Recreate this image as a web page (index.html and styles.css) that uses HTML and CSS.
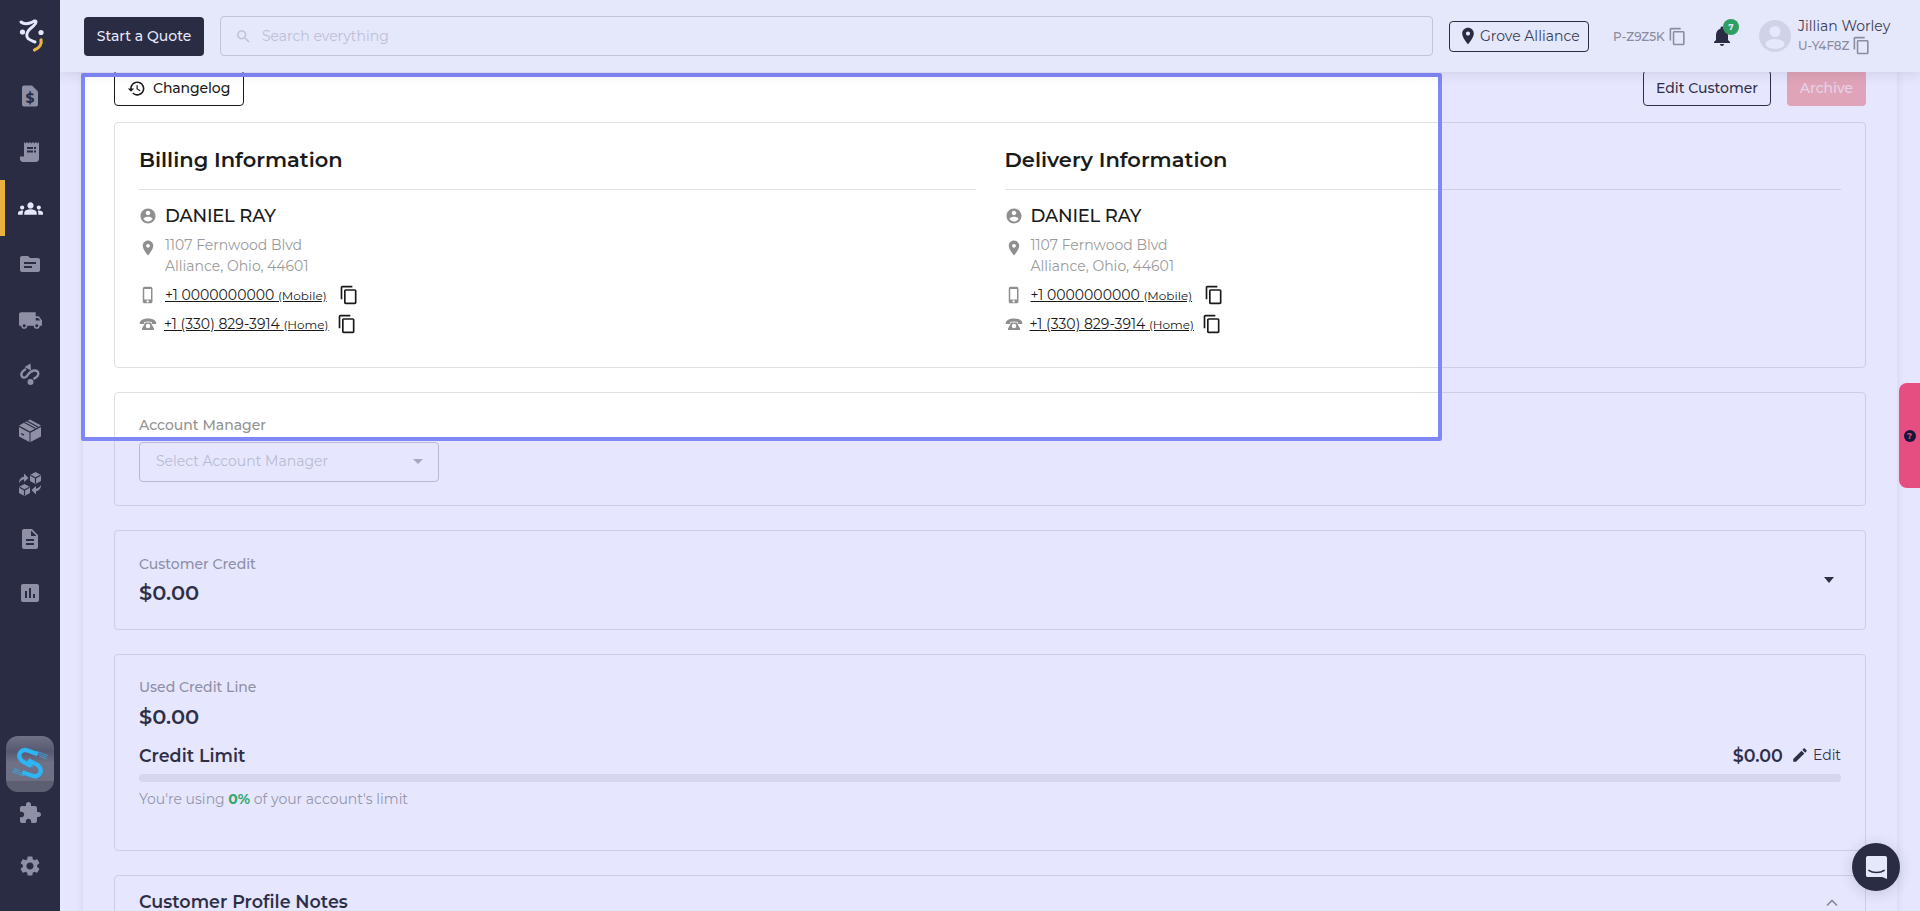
FILE: index.html
```html
<!DOCTYPE html>
<html lang="en">
<head>
<meta charset="utf-8">
<title>Customer</title>
<link rel="stylesheet" href="styles.css">
</head>
<body>
<svg class="defs" width="0" height="0">
  <symbol id="i-copy" viewBox="0 0 24 24"><path d="M16 1H4c-1.1 0-2 .9-2 2v14h2V3h12V1zm3 4H8c-1.1 0-2 .9-2 2v14c0 1.1.9 2 2 2h11c1.1 0 2-.9 2-2V7c0-1.1-.9-2-2-2zm0 16H8V7h11v14z"/></symbol>
  <symbol id="i-pin" viewBox="0 0 24 24"><path d="M12 2C8.13 2 5 5.13 5 9c0 5.25 7 13 7 13s7-7.75 7-13c0-3.87-3.13-7-7-7zm0 9.5c-1.38 0-2.5-1.12-2.5-2.5s1.12-2.5 2.5-2.5 2.5 1.12 2.5 2.5-1.12 2.5-2.5 2.5z"/></symbol>
  <symbol id="i-user" viewBox="0 0 24 24"><path d="M12 2C6.48 2 2 6.48 2 12s4.48 10 10 10 10-4.48 10-10S17.52 2 12 2zm0 3c1.66 0 3 1.34 3 3s-1.34 3-3 3-3-1.34-3-3 1.34-3 3-3zm0 14.2c-2.5 0-4.71-1.28-6-3.22.03-1.99 4-3.08 6-3.08 1.99 0 5.97 1.09 6 3.08-1.29 1.94-3.5 3.22-6 3.22z"/></symbol>
  <symbol id="i-mobile" viewBox="0 0 24 24"><path d="M15.5 1h-8C6.12 1 5 2.12 5 3.5v17C5 21.88 6.12 23 7.5 23h8c1.38 0 2.5-1.12 2.5-2.5v-17C18 2.12 16.88 1 15.5 1zm-4 21c-.83 0-1.5-.67-1.5-1.5s.67-1.5 1.5-1.5 1.5.67 1.5 1.5-.67 1.5-1.5 1.5zm4.5-4H7V4h9v14z"/></symbol>
  <symbol id="i-home-phone" viewBox="0 0 24 24"><path d="M1 10.500C1 7 6 4.500 12 4.500S23 7 23 10.500V12h-6V9.300c-1.500-.5-3.200-.8-5-.8s-3.500.3-5 .8V12H1v-1.500z"/><path fill-rule="evenodd" d="M8.500 10h7l4.500 8v2H4v-2l4.500-8zM12 11.800a3 3 0 1 0 0 6 3 3 0 0 0 0-6z"/></symbol>
</svg>

<div class="app">
  <nav class="sidebar">
    <div class="logo">
      <svg width="34" height="40" viewBox="0 0 34 40">
        <path class="logo-line" d="M6 6c3 2.500 6 2 9 1 2.500-.8 5.500-3 6-1.500.8 2.500-4.500 6-7 8.500-2.500 2.500-3 6.500-1 8.500 1.500 1.500 4.500 2.500 7 3.500"/>
        <circle class="logo-dot" cx="7.500" cy="16" r="2.600"/>
        <circle class="logo-dot" cx="26" cy="16.500" r="2.600"/>
        <path class="logo-arc" d="M26 24c1 4-1.500 8-6.500 10"/>
      </svg>
    </div>
    <div class="nav-list">
      <a class="nav-item">
        <svg class="nav-icon" viewBox="0 0 24 24"><path d="M14 1.500H6c-1.100 0-2 .9-2 2v17c0 1.100.9 2 2 2h12c1.100 0 2-.9 2-2V7.500l-6-6z"/><text class="nav-glyph" x="12" y="18.500">$</text></svg>
      </a>
      <a class="nav-item">
        <svg class="nav-icon" viewBox="0 0 24 24"><path d="M21 2l-1.500 1.500L18 2l-1.500 1.500L15 2l-1.500 1.500L12 2l-1.500 1.500L9 2 7.500 3.500 6 2v14.500H2V19c0 1.660 1.340 3 3 3h13c1.660 0 3-1.340 3-3V2z"/><path class="nav-cut" d="M9 7h6v2H9zM16 7h2v2h-2zM9 10.500h6v2H9zM16 10.500h2v2h-2z"/></svg>
      </a>
      <a class="nav-item is-active">
        <svg class="nav-icon nav-icon-wide" viewBox="0 0 24 24"><path d="M12 12.750c1.630 0 3.070.39 4.240.9 1.080.48 1.760 1.560 1.760 2.730V18H6v-1.610c0-1.180.68-2.260 1.760-2.730 1.170-.52 2.610-.91 4.240-.91zM4 13c1.100 0 2-.9 2-2s-.9-2-2-2-2 .9-2 2 .9 2 2 2zm1.130 1.100c-.37-.06-.74-.1-1.130-.1-.99 0-1.930.21-2.780.58C.48 14.900 0 15.620 0 16.430V18h4.500v-1.610c0-.83.23-1.610.63-2.290zM20 13c1.100 0 2-.9 2-2s-.9-2-2-2-2 .9-2 2 .9 2 2 2zm4 3.430c0-.81-.48-1.530-1.220-1.850-.85-.37-1.790-.58-2.780-.58-.39 0-.76.04-1.130.1.4.68.63 1.460.63 2.290V18H24v-1.570zM12 6c1.660 0 3 1.340 3 3s-1.340 3-3 3-3-1.340-3-3 1.340-3 3-3z"/></svg>
      </a>
      <a class="nav-item">
        <svg class="nav-icon" viewBox="0 0 24 24"><path d="M20 6h-8l-2-2H4c-1.100 0-1.990.9-1.990 2L2 18c0 1.100.9 2 2 2h16c1.100 0 2-.9 2-2V8c0-1.100-.9-2-2-2zm-6 10H6v-2h8v2zm4-4H6v-2h12v2z"/></svg>
      </a>
      <a class="nav-item">
        <svg class="nav-icon nav-icon-wide" viewBox="0 0 24 24"><path d="M20 8h-3V4H3c-1.100 0-2 .9-2 2v11h2c0 1.660 1.340 3 3 3s3-1.340 3-3h6c0 1.660 1.340 3 3 3s3-1.340 3-3h2v-5l-3-4zM6 18.500c-.83 0-1.500-.67-1.500-1.500s.67-1.500 1.500-1.500 1.500.67 1.500 1.500-.67 1.500-1.500 1.500zm13.500-9 1.960 2.500H17V9.500h2.500zm-1.500 9c-.83 0-1.500-.67-1.500-1.500s.67-1.500 1.500-1.500 1.500.67 1.500 1.500-.67 1.500-1.500 1.500z"/></svg>
      </a>
      <a class="nav-item">
        <svg class="nav-icon" viewBox="0 0 24 24"><path class="nav-stroke" d="M8 6c-3 1.500-5 4-4.500 6.500S7 15.500 9 13s3-5 7-5.500 5.500 3 3.500 5.500c-1 1.300-2.500 2-4 3"/><path d="M12.500 0.500l.5 7-6.500-3.500zM9.500 19a3 3 0 1 1 6 0 3 3 0 0 1-6 0z"/></svg>
      </a>
      <a class="nav-item">
        <svg class="nav-icon" viewBox="0 0 24 24"><path d="M12 1.500l11 6-11 6-11-6 11-6z"/><path d="M1 9l10.500 5.700V24L1 18.500V9zM23 9v9.500L12.500 24v-9.300L23 9z"/><path class="nav-line" d="M6.500 4.500l11 6M9 3l11 6M3 15.500l3 1.600"/></svg>
      </a>
      <a class="nav-item">
        <svg class="nav-icon" viewBox="0 0 24 24"><path d="M17.500 0l5.500 3v6l-5.500 3L12 9V3l5.500-3zM6.500 12l5.500 3v6l-5.500 3L1 21v-6l5.500-3z"/><path class="nav-line" d="M12.500 3.300l5 2.700 5-2.700M17.500 6v5.500M1.500 15.300l5 2.700 5-2.700M6.500 18v5.500"/><path d="M1 11c0-3.500 2-6 5-6.300V1.500L10.500 6 6 10V7.300C4 7.500 2.500 9 1 11zM23 13c0 3.500-2 6-5 6.300v3.200L13.500 18 18 14v2.700c2-.2 3.500-1.700 5-3.700z"/></svg>
      </a>
      <a class="nav-item">
        <svg class="nav-icon" viewBox="0 0 24 24"><path d="M14 2H6c-1.100 0-2 .9-2 2v16c0 1.100.89 2 1.990 2H18c1.100 0 2-.9 2-2V8l-6-6zm2 16H8v-2h8v2zm0-4H8v-2h8v2zm-3-5V3.500L18.500 9H13z"/></svg>
      </a>
      <a class="nav-item">
        <svg class="nav-icon" viewBox="0 0 24 24"><path d="M19 3H5c-1.100 0-2 .9-2 2v14c0 1.100.9 2 2 2h14c1.100 0 2-.9 2-2V5c0-1.100-.9-2-2-2zM9 17H7v-7h2v7zm4 0h-2V7h2v10zm4 0h-2v-4h2v4z"/></svg>
      </a>
    </div>
    <div class="nav-bottom">
      <div class="app-tile">
        <svg width="48" height="56" viewBox="-4 -5 56 65">
          <path class="tile-link" d="M33 16L22 12C14 9 9 16 13 22c2 4 9 5 13 8"/>
          <path class="tile-link" d="M15 37l11 4c8 3 13-4 9-10-2-4-9-5-13-8"/>
          <path class="tile-wire" d="M31 12.500l14 5M33 15.500l11 4M35 18.500l8 3M17 41.500l-14-5M15 38.500l-11-4M13 35.500l-8-3M19 25l9 6M21 23l9 6M23 21l8 6"/>
        </svg>
      </div>
      <a class="nav-item nav-item-puzzle">
        <svg class="nav-icon" viewBox="0 0 24 24"><path d="M20.500 11H19V7c0-1.100-.9-2-2-2h-4V3.500C13 2.120 11.880 1 10.500 1S8 2.120 8 3.500V5H4c-1.100 0-1.990.9-1.990 2v3.800H3.500c1.490 0 2.700 1.210 2.700 2.700s-1.210 2.700-2.700 2.700H2V20c0 1.100.9 2 2 2h3.800v-1.500c0-1.490 1.210-2.700 2.700-2.700 1.490 0 2.700 1.210 2.700 2.700V22H17c1.100 0 2-.9 2-2v-4h1.500c1.380 0 2.500-1.120 2.500-2.500S21.880 11 20.500 11z"/></svg>
      </a>
      <a class="nav-item nav-item-gear">
        <svg class="nav-icon" viewBox="0 0 24 24"><path d="M19.140 12.940c.04-.3.06-.61.06-.94 0-.32-.02-.64-.07-.94l2.030-1.580c.18-.14.23-.41.12-.61l-1.920-3.320c-.12-.22-.37-.29-.59-.22l-2.390.96c-.5-.38-1.030-.7-1.620-.94l-.36-2.540c-.04-.24-.24-.41-.48-.41h-3.840c-.24 0-.43.17-.47.41l-.36 2.540c-.59.24-1.130.57-1.620.94l-2.390-.96c-.22-.08-.47 0-.59.22L2.740 8.870c-.12.21-.08.47.12.61l2.030 1.580c-.05.3-.09.63-.09.94s.02.64.07.94l-2.030 1.580c-.18.14-.23.41-.12.61l1.920 3.320c.12.22.37.29.59.22l2.390-.96c.5.38 1.030.7 1.620.94l.36 2.540c.05.24.24.41.48.41h3.840c.24 0 .44-.17.47-.41l.36-2.540c.59-.24 1.130-.56 1.620-.94l2.390.96c.22.08.47 0 .59-.22l1.920-3.320c.12-.22.07-.47-.12-.61l-2.010-1.580zM12 15.600c-1.980 0-3.600-1.620-3.600-3.600s1.620-3.600 3.600-3.600 3.600 1.620 3.600 3.600-1.620 3.600-3.600 3.600z"/></svg>
      </a>
    </div>
  </nav>

  <div class="main">
    <header class="topbar">
      <button class="quote-btn">Start a Quote</button>
      <div class="search">
        <svg class="search-icon" viewBox="0 0 24 24"><path d="M15.500 14h-.79l-.28-.27C15.410 12.590 16 11.110 16 9.500 16 5.910 13.090 3 9.500 3S3 5.910 3 9.500 5.910 16 9.500 16c1.610 0 3.090-.59 4.230-1.570l.27.28v.79l5 4.990L20.490 19l-4.990-5zm-6 0C7.010 14 5 11.990 5 9.500S7.010 5 9.500 5 14 7.010 14 9.500 11.990 14 9.500 14z"/></svg>
        <span class="search-text">Search everything</span>
      </div>
      <button class="location-btn"><svg class="location-icon"><use href="#i-pin"/></svg>Grove Alliance</button>
      <div class="code-chip"><span>P-Z9Z5K</span><svg class="code-copy"><use href="#i-copy"/></svg></div>
      <div class="bell">
        <svg class="bell-icon" viewBox="0 0 24 24"><path d="M12 22c1.100 0 2-.9 2-2h-4c0 1.100.89 2 2 2zm6-6v-5c0-3.070-1.640-5.640-4.500-6.320V4c0-.83-.67-1.500-1.500-1.500s-1.500.67-1.500 1.500v.68C7.630 5.360 6 7.920 6 11v5l-2 2v1h16v-1l-2-2z"/></svg>
        <span class="bell-badge">7</span>
      </div>
      <div class="profile">
        <svg class="avatar" viewBox="0 0 32 32"><circle class="avatar-bg" cx="16" cy="16" r="16"/><circle class="avatar-fg" cx="16" cy="11.500" r="5.500"/><ellipse class="avatar-fg" cx="16" cy="24" rx="9.500" ry="5"/></svg>
        <div class="profile-text">
          <div class="profile-name">Jillian Worley</div>
          <div class="code-chip code-chip-user"><span>U-Y4F8Z</span><svg class="code-copy"><use href="#i-copy"/></svg></div>
        </div>
      </div>
    </header>

    <div class="content">
      <div class="panel">
        <div class="toolbar">
          <button class="btn btn-changelog">
            <svg class="btn-icon" viewBox="0 0 24 24"><path d="M13 3c-4.970 0-9 4.030-9 9H1l3.890 3.890.07.14L9 12H6c0-3.870 3.130-7 7-7s7 3.130 7 7-3.130 7-7 7c-1.930 0-3.680-.79-4.940-2.060l-1.420 1.420C8.270 19.990 10.510 21 13 21c4.970 0 9-4.030 9-9s-4.030-9-9-9zm-1 5v5l4.280 2.540.72-1.210-3.500-2.080V8H12z"/></svg>
            Changelog
          </button>
          <div class="toolbar-right">
            <button class="btn btn-edit">Edit Customer</button>
            <button class="btn btn-archive">Archive</button>
          </div>
        </div>

        <section class="card card-info">
          <div class="info-col">
            <h2 class="info-title">Billing Information</h2>
            <div class="info-name"><svg class="row-icon"><use href="#i-user"/></svg>DANIEL RAY</div>
            <div class="info-addr"><svg class="row-icon row-icon-pin"><use href="#i-pin"/></svg><div>1107 Fernwood Blvd<br>Alliance, Ohio, 44601</div></div>
            <div class="info-phone"><svg class="row-icon"><use href="#i-mobile"/></svg><a class="phone-link">+1 0000000000 <small>(Mobile)</small></a><svg class="copy-icon"><use href="#i-copy"/></svg></div>
            <div class="info-phone info-phone-home"><svg class="row-icon"><use href="#i-home-phone"/></svg><a class="phone-link">+1 (330) 829-3914 <small>(Home)</small></a><svg class="copy-icon"><use href="#i-copy"/></svg></div>
          </div>
          <div class="info-col">
            <h2 class="info-title">Delivery Information</h2>
            <div class="info-name"><svg class="row-icon"><use href="#i-user"/></svg>DANIEL RAY</div>
            <div class="info-addr"><svg class="row-icon row-icon-pin"><use href="#i-pin"/></svg><div>1107 Fernwood Blvd<br>Alliance, Ohio, 44601</div></div>
            <div class="info-phone"><svg class="row-icon"><use href="#i-mobile"/></svg><a class="phone-link">+1 0000000000 <small>(Mobile)</small></a><svg class="copy-icon"><use href="#i-copy"/></svg></div>
            <div class="info-phone info-phone-home"><svg class="row-icon"><use href="#i-home-phone"/></svg><a class="phone-link">+1 (330) 829-3914 <small>(Home)</small></a><svg class="copy-icon"><use href="#i-copy"/></svg></div>
          </div>
        </section>

        <section class="card card-manager">
          <div class="label">Account Manager</div>
          <div class="select"><span>Select Account Manager</span><i class="select-caret"></i></div>
        </section>

        <section class="card card-credit">
          <div>
            <div class="label">Customer Credit</div>
            <div class="amount">$0.00</div>
          </div>
          <i class="credit-caret"></i>
        </section>

        <section class="card card-line">
          <div class="label">Used Credit Line</div>
          <div class="amount">$0.00</div>
          <div class="limit-row">
            <span class="limit-title">Credit Limit</span>
            <span class="limit-right">
              <span class="limit-value">$0.00</span>
              <svg class="edit-icon" viewBox="0 0 24 24"><path d="M3 17.250V21h3.750L17.810 9.940l-3.750-3.750L3 17.250zM20.710 7.040c.39-.39.39-1.020 0-1.410l-2.340-2.340c-.39-.39-1.020-.39-1.410 0l-1.830 1.830 3.750 3.750 1.830-1.830z"/></svg>
              <span class="limit-edit">Edit</span>
            </span>
          </div>
          <div class="progress"></div>
          <div class="usage">You're using <b>0%</b> of your account's limit</div>
        </section>

        <section class="card card-notes">
          <h3 class="notes-title">Customer Profile Notes</h3>
          <svg class="notes-chevron" viewBox="0 0 12 8"><path d="M1 6.500l5-5 5 5"/></svg>
        </section>
      </div>
      <div class="spotlight"></div>
    </div>
  </div>

  <div class="help-tab"><span class="help-dot">?</span></div>
  <div class="chat-bubble">
    <svg width="23" height="25" viewBox="0 0 24 26"><path class="chat-shape" d="M3 1h18a2 2 0 0 1 2 2v22l-5-2H3a2 2 0 0 1-2-2V3a2 2 0 0 1 2-2z"/><path class="chat-smile" d="M4 16c4 3 12 3 16 0"/></svg>
  </div>
</div>
</body>
</html>
```

FILE: styles.css
```css
* { box-sizing: border-box; }
html, body { margin: 0; height: 100%; overflow: hidden; }
body {
  font-family: Montserrat, Inter, "Open Sans", sans-serif;
  font-size: 14px;
  color: #1a1a1a;
  background: #fff;
}
.defs { position: absolute; }
button { font-family: inherit; cursor: pointer; }
h2, h3 { margin: 0; }

.app { display: flex; height: 911px; width: 1920px; overflow: hidden; position: relative; }

/* Sidebar */
.sidebar {
  width: 60px;
  flex: none;
  background: #2a2c44;
  display: flex;
  flex-direction: column;
  position: relative;
  z-index: 5;
}
.logo { height: 68px; display: flex; align-items: flex-start; justify-content: center; padding: 16px 0 0 4px; }
.logo-line { fill: none; stroke: #e5e7fb; stroke-width: 3; stroke-linecap: round; stroke-linejoin: round; }
.logo-dot { fill: #e5e7fb; }
.logo-arc { fill: none; stroke: #e8b33f; stroke-width: 3.200; stroke-linecap: round; }
.nav-list { display: flex; flex-direction: column; }
.nav-item { height: 54.500px; display: flex; align-items: center; justify-content: center; }
.nav-list .nav-item:nth-child(-n+5) { height: 56px; }
.nav-item.is-active { box-shadow: inset 5px 0 0 #e8b33f; }
.nav-item.is-active .nav-icon { fill: #e5e7fb; }
.nav-icon { width: 24px; height: 24px; fill: #8f90a6; }
.nav-icon-wide { width: 25px; height: 25px; }
.nav-glyph { fill: #2a2c44; font-size: 14px; font-weight: 700; text-anchor: middle; }
.nav-cut { fill: #2a2c44; }
.nav-stroke { fill: none; stroke: #8f90a6; stroke-width: 2.400; }
.nav-line { fill: none; stroke: #2a2c44; stroke-width: 1.200; }
.nav-bottom { margin-top: auto; display: flex; flex-direction: column; align-items: center; padding-bottom: 18px; }
.nav-item-puzzle { height: 42px; margin-bottom: 5px; }
.nav-item-gear { height: 54px; }
.app-tile {
  width: 48px;
  height: 56px;
  border-radius: 12px;
  background: linear-gradient(#6f7186 0, #575970 28%, #6f7186 48%, #6d6f84 80%, #5c5e72 81%, #5c5e72 100%);
  flex: none;
}
.app-tile svg { display: block; }
.tile-link { fill: none; stroke: #2fb4f5; stroke-width: 5; stroke-linecap: butt; }
.tile-wire { fill: none; stroke: #2fb4f5; stroke-width: .8; }

/* Main column */
.main { flex: 1; min-width: 0; display: flex; flex-direction: column; }
.topbar {
  height: 72px;
  flex: none;
  background: #e5e7fb;
  box-shadow: 0 2px 12px rgba(42, 44, 68, .12);
  display: flex;
  align-items: center;
  padding: 0 0 0 24px;
  position: relative;
  z-index: 4;
}
.topbar > * { flex: none; }
.quote-btn {
  width: 120px;
  height: 39px;
  border: 0;
  border-radius: 4px;
  background: #2a2c44;
  color: #e5e7fb;
  font-size: 14px;
  font-weight: 500;
  padding: 0;
}
.search {
  width: 1213px;
  height: 40px;
  margin-left: 16px;
  border: 1px solid #c0c3dc;
  border-radius: 4px;
  display: flex;
  align-items: center;
  padding-left: 14px;
}
.search-icon { width: 17px; height: 17px; fill: #bdbfd6; }
.search-text { margin-left: 10px; color: #bdbfd6; font-size: 14px; }
.location-btn {
  width: 140px;
  height: 31px;
  margin-left: 16px;
  border: 1px solid #2a2c44;
  border-radius: 4px;
  background: transparent;
  color: #3b3d55;
  font-size: 14px;
  font-weight: 400;
  display: flex;
  align-items: center;
  padding: 0 0 0 8px;
  gap: 2px;
  white-space: nowrap;
}
.location-icon { width: 20px; height: 20px; fill: #2a2c44; flex: none; }
.code-chip { display: flex; align-items: center; font-size: 12px; color: #8a8ca0; gap: 3px; font-weight: 500; white-space: nowrap; }
.topbar > .code-chip { margin-left: 24px; width: 75px; }
.code-copy { width: 19px; height: 19px; fill: #8a8ca0; flex: none; }
.bell { width: 24px; height: 24px; position: relative; margin-left: 22px; }
.bell-icon { width: 24px; height: 24px; fill: #2a2c44; }
.bell-badge {
  position: absolute;
  left: 13px;
  top: -5px;
  width: 16px;
  height: 16px;
  border-radius: 50%;
  background: #2e9e63;
  color: #e5e7fb;
  font-size: 8px;
  font-weight: 700;
  text-align: center;
  line-height: 16px;
}
.profile { display: flex; align-items: center; margin-left: 25px; gap: 7px; }
.avatar { width: 32px; height: 32px; flex: none; }
.avatar-bg { fill: #d0d3e8; }
.avatar-fg { fill: #e5e7fb; }
.profile-name { font-size: 14px; font-weight: 400; color: #3b3d55; line-height: 18px; white-space: nowrap; }
.code-chip-user { margin-top: 1px; }

/* Content */
.content { flex: 1; margin-top: -2px; position: relative; overflow: hidden; }
.panel {
  margin: 0 23px;
  padding: 0 31px;
  background: #fff;
  box-shadow: 0 0 8px rgba(0, 0, 0, .1);
  min-height: 100%;
}
.toolbar { display: flex; justify-content: space-between; height: 36px; margin-bottom: 16px; }
.toolbar-right { display: flex; gap: 16px; }
.btn {
  height: 36px;
  border: 1px solid #1a1a1a;
  border-radius: 4px;
  background: #fff;
  color: #1a1a1a;
  font-size: 14px;
  font-weight: 500;
  padding: 0;
}
.btn-changelog { width: 130px; display: flex; align-items: center; padding-left: 12px; gap: 7px; letter-spacing: -.1px; }
.btn-icon { width: 19px; height: 19px; fill: #1a1a1a; flex: none; }
.btn-edit { width: 128px; }
.btn-archive { width: 79px; border: 0; background: #f8aca8; color: #ffe4e6; }

.card { border: 1px solid #e0e0e0; border-radius: 4px; margin-bottom: 24px; padding: 0 24px; }
.card-info { display: grid; grid-template-columns: 1fr 1fr; column-gap: 29px; padding-top: 25px; height: 246px; }
.info-title {
  font-size: 21px;
  font-weight: 600;
  line-height: 24px;
  padding-bottom: 17px;
  border-bottom: 1px solid #e0e0e0;
}
.info-name { display: flex; align-items: center; gap: 8px; height: 24px; margin-top: 14px; font-size: 18px; font-weight: 500; letter-spacing: -.2px; }
.row-icon { width: 18px; height: 18px; fill: #8f8f8f; flex: none; }
.row-icon-pin { margin-top: 4px; }
.info-addr { display: flex; gap: 8px; align-items: flex-start; margin-top: 7px; color: #9a9a9a; line-height: 21px; }
.info-phone { display: flex; align-items: center; gap: 8px; height: 24px; margin-top: 5px; }
.info-addr + .info-phone { margin-top: 6px; }
.info-phone-home { gap: 7px; }
.phone-link { text-decoration: underline; color: #1a1a1a; }
.phone-link small { font-size: 12px; }
.copy-icon { width: 20px; height: 20px; fill: #1a1a1a; margin-left: 4px; }
.info-phone-home .copy-icon { margin-left: 1px; }

.label { color: #929292; font-size: 14px; line-height: 18px; font-weight: 500; }
.card-manager { padding-top: 23px; height: 114px; }
.select {
  width: 300px;
  height: 40px;
  margin-top: 8px;
  border: 1px solid #c7c7c7;
  border-radius: 4px;
  display: flex;
  align-items: center;
  justify-content: space-between;
  padding: 0 15px 2px 16px;
  color: #c9c9c9;
  font-weight: 400;
}
.select-caret { border: 5px solid transparent; border-top-color: #b0b0b0; border-bottom: 0; }
.amount { font-size: 21px; font-weight: 600; line-height: 26px; margin-top: 8px; color: #1a1a1a; }
.card-credit .amount { margin-top: 7px; }
.card-credit { height: 100px; padding-top: 24px; display: flex; justify-content: space-between; align-items: flex-start; }
.credit-caret { border: 5px solid transparent; border-top: 6px solid #1a1a1a; border-bottom: 0; margin: 22px 7px 0 0; }
.card-line { height: 197px; padding-top: 23px; }
.limit-row { display: flex; justify-content: space-between; align-items: center; margin-top: 13px; height: 24px; }
.limit-title { font-size: 17.500px; font-weight: 600; }
.limit-right { display: flex; align-items: center; }
.limit-value { font-size: 17.500px; font-weight: 600; }
.edit-icon { width: 18px; height: 18px; fill: #1a1a1a; margin-left: 8px; }
.limit-edit { margin-left: 4px; font-size: 14px; font-weight: 400; }
.progress { height: 8px; border-radius: 4px; background: #ebebeb; margin-top: 7px; }
.usage { margin-top: 8px; color: #9a9a9a; line-height: 18px; font-weight: 400; }
.usage b { color: #28af4a; font-weight: 700; }
.card-notes { padding-top: 19px; height: 120px; display: flex; justify-content: space-between; align-items: flex-start; }
.notes-title { font-size: 17.500px; font-weight: 600; line-height: 14px; }
.notes-chevron { width: 12px; height: 8px; fill: none; stroke: #8a8a8a; stroke-width: 1.600; margin: 4px 3px 0 0; }

/* Spotlight highlight lying over the page */
.spotlight {
  position: absolute;
  left: 21px;
  top: 3px;
  width: 1361px;
  height: 368px;
  border: 4px solid #8088f8;
  border-radius: 2px;
  box-shadow: 0 0 0 3000px rgba(128, 136, 248, .2);
  pointer-events: none;
}

/* Floating widgets */
.help-tab {
  position: absolute;
  right: 0;
  top: 383px;
  width: 21px;
  height: 105px;
  background: #e64d80;
  border-radius: 8px 0 0 8px;
  z-index: 6;
  display: flex;
  align-items: center;
  justify-content: center;
}
.help-dot {
  width: 12px;
  height: 12px;
  border-radius: 50%;
  background: #14163a;
  color: #e64d80;
  font-size: 9px;
  font-weight: 700;
  line-height: 12px;
  text-align: center;
}
.chat-bubble {
  position: absolute;
  left: 1852px;
  top: 843px;
  width: 48px;
  height: 48px;
  border-radius: 50%;
  background: #2a2c44;
  box-shadow: 0 2px 14px rgba(42, 44, 68, .18);
  display: flex;
  align-items: center;
  justify-content: center;
  z-index: 6;
}
.chat-shape { fill: #e5e7fb; }
.chat-smile { fill: none; stroke: #2a2c44; stroke-width: 1.500; stroke-linecap: round; }
```
